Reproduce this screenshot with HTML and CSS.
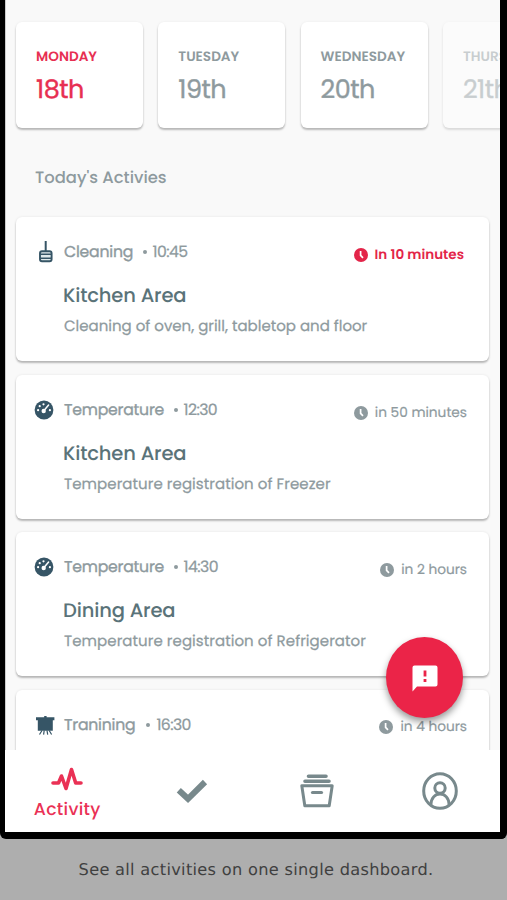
FILE: index.html
```html
<!DOCTYPE html>
<html lang="en">
<head>
<meta charset="utf-8">
<title>Activities</title>
<link rel="stylesheet" href="styles.css">
</head>
<body>
<svg class="defs" aria-hidden="true">
  <symbol id="clock" viewBox="0 0 14 14"><circle cx="7" cy="7" r="7" fill="currentColor"/><path d="M6.600 3v4.300l2.400 2.500" fill="none" stroke="#fff" stroke-width="1.700"/></symbol>
  <symbol id="gauge" viewBox="0 0 20 20"><circle cx="10" cy="10" r="9.400" fill="currentColor"/><g fill="#fff"><circle cx="4.100" cy="10.200" r="1.100"/><circle cx="5.700" cy="6.200" r="1.100"/><circle cx="9.500" cy="4.300" r="1.100"/><circle cx="15.900" cy="10.200" r="1.100"/><circle cx="9.700" cy="11" r="2.200"/></g><path d="M10 10.500l4.600-5.500" stroke="#fff" stroke-width="1.500" stroke-linecap="round"/></symbol>
</svg>
<main class="phone">
  <div class="screen">
    <section class="days">
      <div class="day active"><span class="name">MONDAY</span><span class="date">18th</span></div>
      <div class="day"><span class="name">TUESDAY</span><span class="date">19th</span></div>
      <div class="day"><span class="name">WEDNESDAY</span><span class="date">20th</span></div>
      <div class="day faded"><span class="name">THURSDAY</span><span class="date">21th</span></div>
    </section>
    <h1 class="heading">Today's Activies</h1>
    <section class="list">
      <article class="card">
        <header class="meta">
          <svg class="icon broom" viewBox="0 0 20 24"><path d="M10.700 1v10" stroke="currentColor" stroke-width="2"/><rect x="5" y="11.200" width="11.600" height="10" rx="2" fill="#dfe9eb" stroke="currentColor" stroke-width="1.900"/><path d="M5 14.300h11.600M5 18.200h11.600" stroke="currentColor" stroke-width="1.400"/></svg>
          <span class="kind">Cleaning</span><i class="dot"></i><span class="time">10:45</span>
          <span class="due soon"><svg class="clock"><use href="#clock"/></svg><span>In 10 minutes</span></span>
        </header>
        <h2 class="title">Kitchen Area</h2>
        <p class="desc">Cleaning of oven, grill, tabletop and floor</p>
      </article>
      <article class="card">
        <header class="meta">
          <svg class="icon gauge"><use href="#gauge"/></svg>
          <span class="kind">Temperature</span><i class="dot"></i><span class="time">12:30</span>
          <span class="due low"><svg class="clock"><use href="#clock"/></svg><span>in 50 minutes</span></span>
        </header>
        <h2 class="title">Kitchen Area</h2>
        <p class="desc wide">Temperature registration of Freezer</p>
      </article>
      <article class="card">
        <header class="meta">
          <svg class="icon gauge"><use href="#gauge"/></svg>
          <span class="kind">Temperature</span><i class="dot"></i><span class="time">14:30</span>
          <span class="due"><svg class="clock"><use href="#clock"/></svg><span>in 2 hours</span></span>
        </header>
        <h2 class="title">Dining Area</h2>
        <p class="desc wide">Temperature registration of Refrigerator</p>
      </article>
      <article class="card">
        <header class="meta">
          <svg class="icon board" viewBox="0 0 20 24"><path d="M1 4.200h8.200V3h2.400v1.200h7.800v3h-1.600v10.600H2.800V7.200H1z" fill="currentColor"/><path d="M7 17.500l-2.500 4M9.200 17.500l-.6 4.200M12 17.500l.7 4.200M14.200 17.500l2.400 4" stroke="currentColor" stroke-width="1.200"/></svg>
          <span class="kind">Tranining</span><i class="dot far"></i><span class="time">16:30</span>
          <span class="due"><svg class="clock"><use href="#clock"/></svg><span>in 4 hours</span></span>
        </header>
      </article>
    </section>
    <button class="fab" aria-label="Report"><svg viewBox="0 0 26 27"><path d="M2.500.5h21Q25.500.5 25.500 2.500v17q0 2-2 2H5L.5 26.500V2.500Q.5.5 2.500.5z" fill="#fff"/><path d="M13 5.500v6M13 14v3" stroke="#eb2448" stroke-width="2.800"/></svg></button>
  </div>
  <nav class="tabs">
    <a class="tab current"><svg class="pulse" viewBox="0 0 32 24"><path d="M2 16h5.500l3-7 4.500 12.500L20.500 2.500l4.200 13.500H30" fill="none" stroke="currentColor" stroke-width="3.600" stroke-linecap="round" stroke-linejoin="round"/></svg><span>Activity</span></a>
    <a class="tab"><svg class="check" viewBox="0 0 32 24"><path d="M2.800 11.200l9.200 8.600L29 3" fill="none" stroke="currentColor" stroke-width="6"/></svg></a>
    <a class="tab shift"><svg class="box" viewBox="0 0 34 34"><path d="M8.500 2.200h17.500M5 7.200h24" stroke="currentColor" stroke-width="3.600" stroke-linecap="round"/><path d="M1.800 11.800h30.400l-3 20H4.800z" fill="none" stroke="currentColor" stroke-width="3" stroke-linejoin="round"/><path d="M12.500 18.500h9" stroke="currentColor" stroke-width="3.200" stroke-linecap="round"/></svg></a>
    <a class="tab"><svg class="user" viewBox="0 0 36 38"><g fill="none" stroke="currentColor" stroke-width="3"><ellipse cx="18" cy="19" rx="16.300" ry="17.300"/><circle cx="18" cy="16" r="5.200"/><path d="M8.800 33c.3-7 4.200-11 9.200-11s8.900 4 9.200 11"/></g></svg></a>
  </nav>
</main>
<footer class="caption">See all activities on one single dashboard.</footer>
</body>
</html>
```
FILE: styles.css
```css
* { box-sizing: border-box; }
body { margin: 0; width: 507px; height: 900px; overflow: hidden; background: #aeaeae; font-family: Poppins, Inter, sans-serif; color: #8e9a9e; text-rendering: geometricPrecision; }
.defs { position: absolute; width: 0; height: 0; }
.phone { height: 839px; border: solid #000; border-width: 0 7px 7px 5px; border-radius: 0 0 6px 6px; background: #fff; display: flex; flex-direction: column; }
.screen { position: relative; height: 750px; overflow: hidden; background: #f9f9f9; padding: 22px 0 0 10px; border-left: 1px solid #ccc; flex: none; }
.days { display: flex; gap: 15.300px; height: 116px; }
.day { flex: none; width: 127px; height: 106px; padding: 24px 0 0 20px; border-radius: 6px; background: #fff; box-shadow: 0 2px 2px rgba(0,0,0,.25), 0 0 3px rgba(0,0,0,.06); display: flex; flex-direction: column; white-space: nowrap; }
.faded { opacity: .45; }
.name { font-size: 13.600px; font-weight: 600; line-height: 20px; padding-top: 1px; }
.date { font-size: 25.500px; font-weight: 400; line-height: 34px; margin-top: 5px; letter-spacing: -.5px; -webkit-text-stroke: .4px; }
.active { color: #e72f52; }
.heading { margin: 30px 0 0 19px; font-size: 16.400px; line-height: 20px; font-weight: 500; }
.list { display: flex; flex-direction: column; gap: 13.500px; margin-top: 29px; width: 473px; }
.card { height: 144px; flex: none; padding: 25px 22px 0 18px; background: #fff; border-radius: 6px; box-shadow: 0 2px 2px rgba(0,0,0,.25), 0 0 3px rgba(0,0,0,.08); }
.meta { display: flex; align-items: center; height: 20px; font-size: 15.700px; line-height: 20px; white-space: nowrap; }
.icon { width: 20px; height: 24px; margin-right: 10px; color: #365566; flex: none; }
.broom, .board { position: relative; left: 1px; }
.gauge { height: 20px; }
.kind { padding-top: 2px; letter-spacing: -.22px; -webkit-text-stroke: .35px; }
.time { padding-top: 2px; letter-spacing: -.6px; -webkit-text-stroke: .25px; }
.dot { width: 4px; height: 4px; border-radius: 50%; background: #8e9a9e; margin: 0 6px 0 9.500px; }
.far { margin-left: 11px; }
.due { margin-left: auto; display: flex; align-items: center; gap: 7px; font-size: 13.700px; padding-top: 5px; -webkit-text-stroke: .2px; }
.clock { width: 14px; height: 14px; }
.soon { color: #e32549; font-weight: 600; font-size: 13.500px; margin-right: 3px; -webkit-text-stroke: 0; }
.low { padding-top: 7px; }
.title { margin: 20px 0 0 29px; font-size: 19.500px; line-height: 28px; font-weight: 500; letter-spacing: -.15px; color: #5a7379; }
.desc { margin: 7px 0 0 30px; font-size: 15px; line-height: 20px; white-space: nowrap; -webkit-text-stroke: .25px; }
.wide { letter-spacing: .07px; }
.fab { position: absolute; left: 380px; top: 637px; width: 77px; height: 81px; border: 0; border-radius: 50%; background: #eb2448; box-shadow: 0 4px 7px rgba(0,0,0,.4); display: grid; place-items: center; padding: 2px 0 0; }
.fab svg { width: 26px; height: 27px; }
.tabs { flex: 1; display: grid; grid-template-columns: repeat(4, 124.400px); color: #78898c; }
.tab { display: flex; flex-direction: column; align-items: center; justify-content: center; }
.shift { padding-left: 2px; }
.current { color: #ea3155; font-size: 17.300px; font-weight: 500; letter-spacing: .3px; line-height: 24px; padding-top: 7px; }
.pulse { width: 32px; height: 24px; margin-bottom: 7px; }
.check { width: 32px; height: 24px; }
.box { width: 34px; height: 34px; }
.user { width: 36px; height: 38px; }
.caption { height: 61px; padding-left: 5px; text-align: center; font: 16.200px/61px "DejaVu Sans", sans-serif; letter-spacing: .3px; color: #404040; }
```
